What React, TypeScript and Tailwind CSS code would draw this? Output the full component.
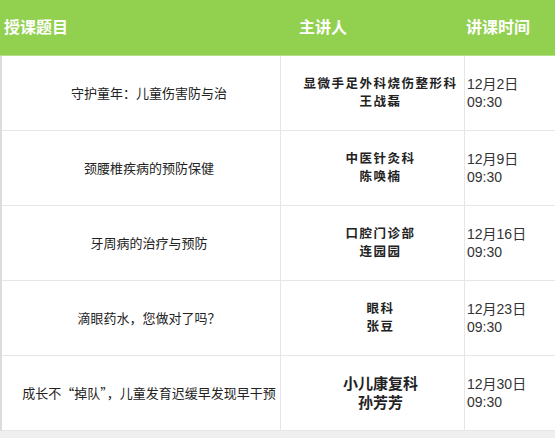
const rows = [
  { title: "守护童年：儿童伤害防与治", dept: "显微手足外科烧伤整形科", name: "王战磊", date: "12月2日" },
  { title: "颈腰椎疾病的预防保健", dept: "中医针灸科", name: "陈唤楠", date: "12月9日" },
  { title: "牙周病的治疗与预防", dept: "口腔门诊部", name: "连园园", date: "12月16日" },
  { title: "滴眼药水，您做对了吗？", dept: "眼科", name: "张豆", date: "12月23日" },
  { title: "成长不“掉队”，儿童发育迟缓早发现早干预", dept: "小儿康复科", name: "孙芳芳", date: "12月30日", big: true },
];

export default function App() {
  return (
    <div
      className="w-[555px] h-[438px] bg-[#efefef] overflow-hidden"
      style={{ fontFamily: '"Liberation Sans", "Noto Sans CJK SC", sans-serif' }}
    >
      {/* Header */}
      <div className="h-[56px] bg-[#92d050] border-b border-[#b5e08a] grid grid-cols-[280px_184px_91px] items-center text-white font-bold text-[16px]">
        <div className="pl-1">授课题目</div>
        <div className="pl-[19px]">主讲人</div>
        <div className="pl-[2px]">讲课时间</div>
      </div>

      {/* Body */}
      <div className="bg-white border-l-2 border-[#dcdcdc]">
        {rows.map((r, i) => (
          <div
            key={i}
            className="h-[75px] grid grid-cols-[278px_184px_91px] border-b border-[#e6e6e6] text-[#222]"
          >
            <div className="flex items-center justify-center pl-4 text-[13px] whitespace-nowrap font-['Noto_Sans_CJK_SC',sans-serif]">
              {r.title}
            </div>
            <div
              className={
                r.big
                  ? "flex flex-col items-center justify-center pl-4 border-l border-[#e6e6e6] font-bold text-[15px] leading-[19px]"
                  : "flex flex-col items-center justify-center pl-4 border-l border-[#e6e6e6] font-bold text-[12.5px] tracking-[1.5px] leading-[18px]"
              }
            >
              <span>{r.dept}</span>
              <span>{r.name}</span>
            </div>
            <div className="flex flex-col justify-center pl-[2px] border-l border-[#e6e6e6] text-[14px] leading-[18px] text-[#333]">
              <span>{r.date}</span>
              <span>09:30</span>
            </div>
          </div>
        ))}
      </div>
    </div>
  );
}
